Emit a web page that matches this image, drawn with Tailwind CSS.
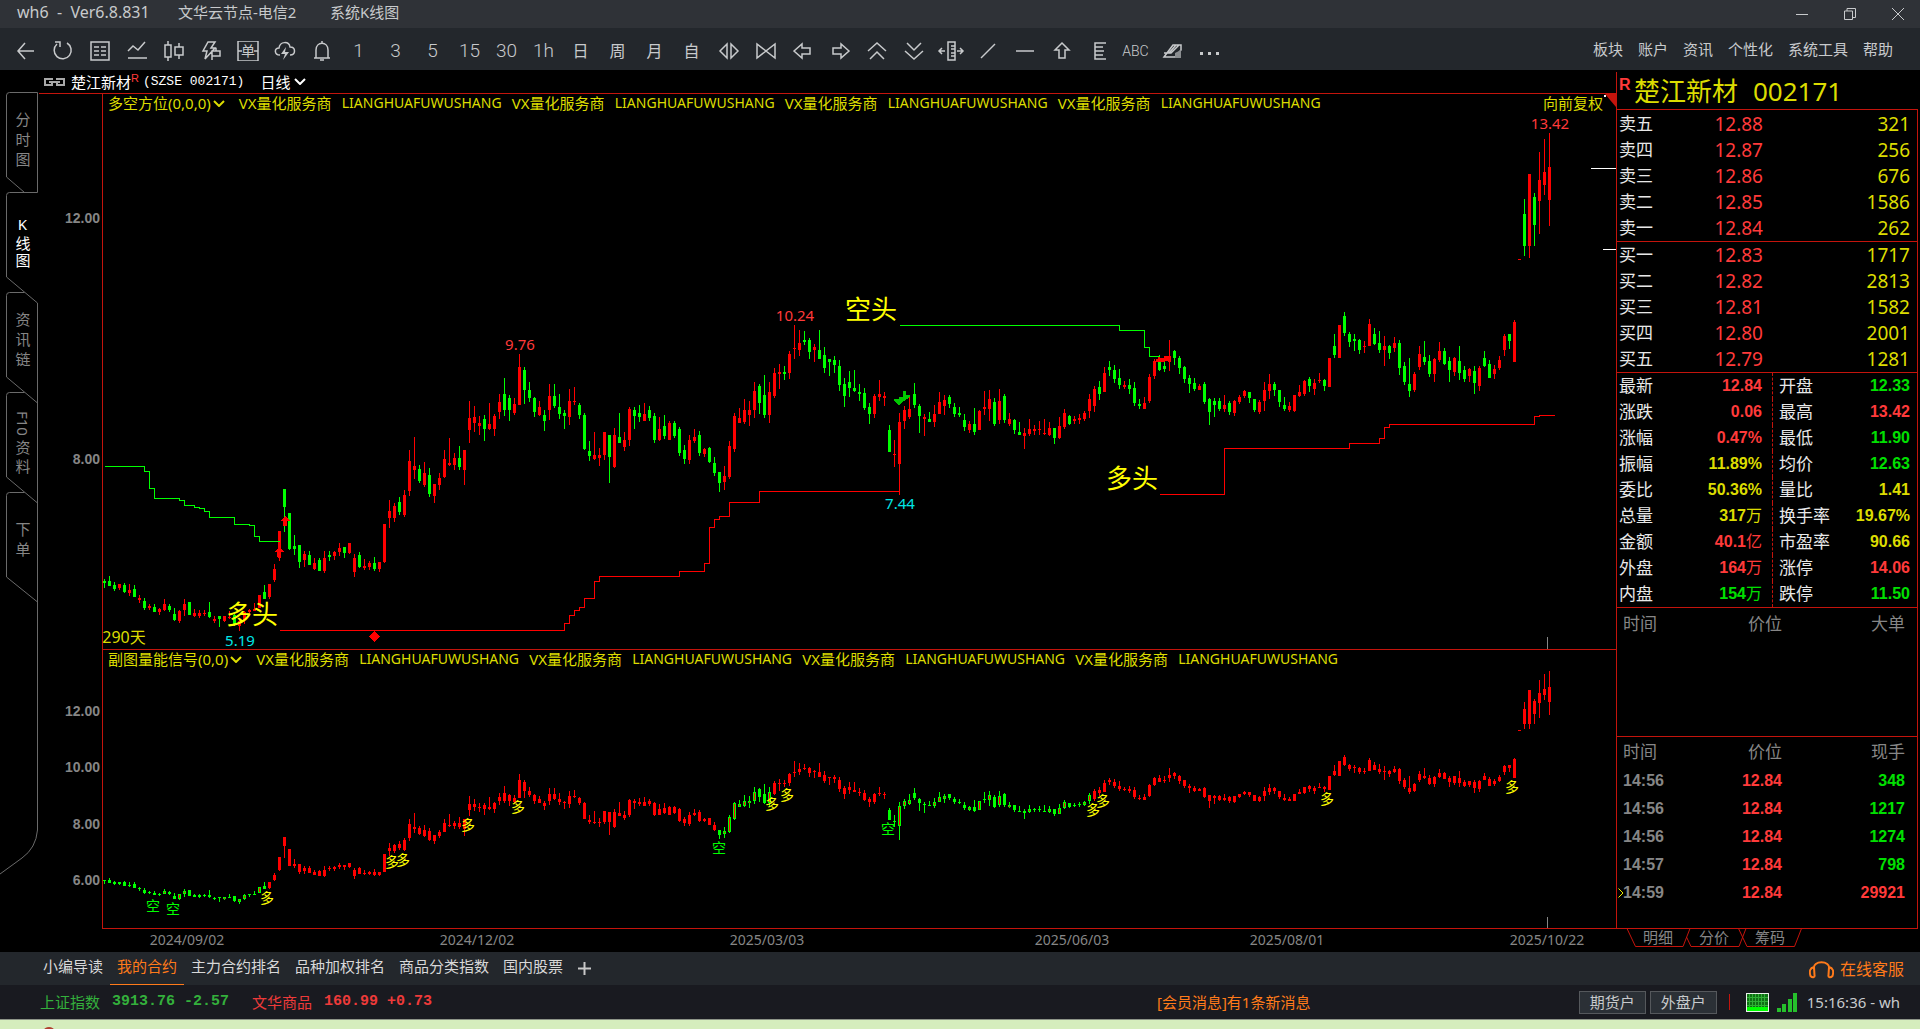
<!DOCTYPE html>
<html lang="zh-CN">
<head>
<meta charset="utf-8">
<title>wh6 - 系统K线图</title>
<script src="https://cdn.jsdelivr.net/npm/@tailwindcss/browser@4"></script>
</head>
<body class="bg-black font-['Noto_Sans','Noto_Sans_CJK_SC',sans-serif] text-[15px] leading-5 text-[#c8cacc]">
<div class="flex min-h-screen flex-col">

<header class="flex h-7 shrink-0 items-center bg-[#2f3237] pl-[17px] pr-4">
  <h1 class="flex items-center pb-1 whitespace-pre"><span class="w-[161px] text-[16px] leading-5">wh6  -  Ver6.8.831</span><span class="w-[152px]">文华云节点-电信2</span><span>系统K线图</span></h1>
  <div class="ml-auto flex gap-9">
    <button aria-label="最小化"><svg class="size-3" viewBox="0 0 12 12" stroke="#c8cacc"><path d="M0 6.5H12"/></svg></button>
    <button aria-label="还原"><svg class="size-3" viewBox="0 0 12 12" fill="none" stroke="#c8cacc"><path d="M.5 3H8.5V11.5H.5ZM3 3V.5H11.5V9.500H8.500"/></svg></button>
    <button aria-label="关闭"><svg class="size-3" viewBox="0 0 12 12" stroke="#c8cacc"><path d="M0 0L12 12M12 0L0 12"/></svg></button>
  </div>
</header>

<nav class="flex h-[42px] shrink-0 items-center bg-[#23272c] pl-[7px] pr-[27px]">
  <div id="tools" class="flex items-center pt-[3px]"></div>
  <div class="ml-auto flex gap-[15px] whitespace-nowrap">
    <a href="#">板块</a><a href="#">账户</a><a href="#">资讯</a><a href="#">个性化</a><a href="#">系统工具</a><a href="#">帮助</a>
  </div>
</nav>

<main class="flex flex-1">
  <aside class="relative w-[39px] shrink-0 text-[#868686]">
    <svg class="absolute inset-0" width="39" height="830" fill="none" stroke="#6a6a6a">
      <path d="M6.500 25.500Q6.500 22.500 9.500 22.500H37.500V122.500H9.500Q6.500 122.500 6.500 125.500V207L37.500 233V760Q36 778 22 788L0 804M6.500 25V107L24.500 122.500M24.500 222.500H9.500Q6.500 222.500 6.500 225.500V307L37.500 333M24.500 322.500H9.500Q6.500 322.500 6.500 325.500V407L37.500 433M24.500 422.500H9.500Q6.500 422.500 6.500 425.500V507L37.500 532"/>
    </svg>
    <nav class="relative flex flex-col items-center pt-[22px] pl-1.5">
      <a href="#" class="flex h-[100px] items-center justify-center [writing-mode:vertical-rl] tracking-[5px]">分时图</a>
      <a href="#" class="flex h-[100px] items-center justify-center text-white [writing-mode:vertical-rl] [text-orientation:upright] tracking-[2px]">K线图</a>
      <a href="#" class="flex h-[100px] items-center justify-center [writing-mode:vertical-rl] tracking-[5px]">资讯链</a>
      <a href="#" class="flex h-[100px] items-center justify-center [writing-mode:vertical-rl]">F10&nbsp;资&nbsp;料</a>
      <a href="#" class="flex h-[100px] items-center justify-center [writing-mode:vertical-rl] tracking-[5px]">下单</a>
    </nav>
  </aside>

  <section class="flex min-w-0 flex-1 flex-col">
    <div class="flex h-[23px] items-center pl-[5px] text-white">
      <svg class="mr-1.5" width="21" height="8" fill="none" stroke="#a8a8a8" stroke-width="2"><path d="M8 2V1H1V7H8V5M13 2V1H20V7H13V5M5 4H16"/></svg>
      <span>楚江新材</span><sup class="-top-1 font-['Liberation_Sans'] text-[11px] text-[#ff3a3a]">R</sup>
      <span class="ml-1 font-['Liberation_Mono',monospace] text-[13px] leading-5">(SZSE 002171)</span>
      <button class="ml-4 flex items-center gap-1">日线<svg width="12" height="7" fill="none" stroke="#fff" stroke-width="2"><path d="M1 1L6 6L11 1"/></svg></button>
    </div>

    <div class="flex h-[556px] border-t border-[#c4140c]">
      <svg id="axis1" class="w-[63px] shrink-0" height="555"></svg>
      <div class="relative min-w-0 flex-1 overflow-hidden border-l border-[#c4140c]">
        <svg id="price" class="block w-full" height="555" shape-rendering="crispEdges"></svg>
        <div class="absolute inset-x-0 top-0 flex pl-[5px] pr-[13px] leading-[18px] whitespace-nowrap text-[#dcdc00]">
          <button class="mr-[14px] flex items-center gap-0.5">多空方位(0,0,0)<svg width="12" height="7" fill="none" stroke="#dcdc00" stroke-width="2"><path d="M1 1L6 6L11 1"/></svg></button>
          <div class="vx flex"></div>
          <button class="ml-auto">向前复权</button>
        </div>
        <svg class="absolute top-0 right-0" width="12" height="13"><path d="M1 0H12V13Z" fill="#c4140c"/><path d="M0 1H2V3H0Z" fill="#fff"/></svg>
      </div>
    </div>

    <div class="flex h-[279px]">
      <svg id="axis2" class="w-[63px] shrink-0" height="279"></svg>
      <div class="relative min-w-0 flex-1 overflow-hidden border-t border-l border-[#c4140c]">
        <svg id="signal" class="block w-full" height="278" shape-rendering="crispEdges"></svg>
        <div class="absolute inset-x-0 top-0 flex pl-[5px] leading-[18px] whitespace-nowrap text-[#dcdc00]">
          <button class="mr-[14px] flex items-center gap-0.5">副图量能信号(0,0)<svg width="12" height="7" fill="none" stroke="#dcdc00" stroke-width="2"><path d="M1 1L6 6L11 1"/></svg></button>
          <div class="vx flex"></div>
        </div>
      </div>
    </div>
    <div class="pl-[63px]"><svg id="dates" class="block w-full border-t border-[#c4140c]" height="24"></svg></div>
  </section>

  <aside class="mt-0.5 w-[304px] shrink-0 pr-0.5">
    <div class="border-r-0 border-l border-[#c4140c]">
      <h2 class="flex h-[37px] items-center text-[26px] leading-8 whitespace-pre text-[#dcdc00]"><span class="mb-3 ml-0.5 w-[15px] font-['Liberation_Sans'] text-[16px] leading-5 font-bold text-[#ff3a3a]">R</span><span class="w-[119px]">楚江新材</span><span>002171</span></h2>
    </div>
    <div class="border-x border-t border-[#c4140c] pt-px"><table id="asks" class="w-full"></table></div>
    <div class="border-x border-t border-[#c4140c]"><table id="bids" class="w-full"></table></div>
    <div class="grid grid-cols-[156px_1fr] border-x border-t border-[#c4140c]">
      <table id="statsL" class="border-r border-dashed border-[#c4140c]"></table>
      <table id="statsR"></table>
    </div>
    <div class="h-[129px] border-x border-t border-[#c4140c]">
      <table class="w-full text-[17px] leading-6 text-[#868686]"><tbody><tr class="h-8"><th class="w-1/3 pl-1.5 text-left font-normal">时间</th><th class="w-1/3 pr-[35px] text-right font-normal">价位</th><th class="w-1/3 pr-3 text-right font-normal">大单</th></tr></tbody></table>
    </div>
    <div class="relative h-[192px] border-x border-t border-[#c4140c]">
      <table id="ticks" class="w-full"></table>
      <svg class="absolute top-[151px] left-px" width="6" height="10" fill="none" stroke="#f0f000"><path d="M.5 .5L5 5L.5 9.500"/></svg>
    </div>
    <div class="relative h-6 text-[15px] leading-5 text-[#868686]">
      <svg class="absolute inset-0" width="302" height="24" fill="none" stroke="#c4140c"><path d="M0 .5H302M11 .5L19.500 18.500H67L74 .5M70.500 9L75 18.500H123L130 .5M122.500 .5L131 18.500H178.500L185.500 .5"/></svg>
      <nav class="relative flex gap-[26px] pl-[27px] leading-[18px]"><a href="#">明细</a><a href="#">分价</a><a href="#">筹码</a></nav>
    </div>
  </aside>
</main>

<nav class="flex h-[33px] shrink-0 items-stretch bg-[#23272c] pl-9 pr-4 leading-7 whitespace-nowrap text-[#d8d8d8]">
  <a href="#" class="px-[7px]">小编导读</a>
  <a href="#" class="border-b border-[#ff7a1a] px-[7px] text-[#ff7a1a]">我的合约</a>
  <a href="#" class="px-[7px]">主力合约排名</a>
  <a href="#" class="px-[7px]">品种加权排名</a>
  <a href="#" class="px-[7px]">商品分类指数</a>
  <a href="#" class="px-[7px]">国内股票</a>
  <button class="ml-2" aria-label="添加"><svg width="13" height="13" stroke="#c8c8c8" stroke-width="2"><path d="M6.500 0V13M0 6.500H13"/></svg></button>
  <a href="#" class="ml-auto flex items-center gap-1.5 text-[16px] text-[#ff7a1a]"><svg width="25" height="20" fill="none" stroke="#ff7a1a" stroke-width="2"><path d="M5 10C3 1 22 1 20 10M5 8C1 9 0 12 1.500 17C4 19.500 6 18 5.500 16ZM20 8C24 9 25 12 23.500 17C21 19.500 19 18 19.500 16Z"/></svg>在线客服</a>
</nav>

<footer class="flex h-[35px] shrink-0 items-center border-b border-[#8d9488] bg-[#191a20] pl-10 pr-5 whitespace-pre">
  <div class="flex w-[1117px] shrink items-center text-[#34b03c]">
    <span class="w-[72px]">上证指数</span><b class="w-[140px] font-['Liberation_Mono',monospace] font-bold">3913.76 -2.57</b>
    <span class="w-[72px] text-[#ee3a3a]">文华商品</span><b class="font-['Liberation_Mono',monospace] font-bold text-[#ee3a3a]">160.99 +0.73</b>
  </div>
  <a href="#" class="text-[#ff7a1a]">[会员消息]有1条新消息</a>
  <div class="ml-auto flex items-center gap-1">
    <button class="h-[23px] border border-[#55585c] bg-[#2b3036] px-2.5 leading-5">期货户</button>
    <button class="h-[23px] border border-[#55585c] bg-[#2b3036] px-2.5 leading-5">外盘户</button>
    <span class="mx-2 h-4 w-px bg-[#c4140c]"></span>
    <svg class="mx-1" width="23" height="19"><rect width="23" height="19" fill="#e8f0e8"/><rect x="1" y="1" width="21" height="13" fill="#0f6f14"/><rect x="1" y="14" width="21" height="4" fill="#0f0"/><path d="M3.500 1V14M6.500 1V14M9.500 1V14M12.500 1V14M15.500 1V14M18.500 1V14M1 4.500H22M1 8.500H22M1 12.500H22" stroke="#2fae35"/></svg>
    <svg width="20" height="19" fill="#26c02c"><path d="M0 15H4V19H0ZM5 11H9V19H5ZM11 6H15V19H11ZM16 0H20V19H16Z"/></svg>
    <time class="ml-1.5">15:16:36 - wh</time>
  </div>
</footer>
<div class="min-h-[9px] flex-1 bg-[#d5edbd] pl-10"><svg class="block" width="18" height="9"><ellipse cx="9" cy="10" rx="5" ry="3" fill="#b04030"/></svg></div>
</div>

<script>
const $ = id => document.getElementById(id);

// ---- toolbar ----
const icon = d => `<svg width="22" height="20" viewBox="0 0 22 20" fill="none" stroke="#c8cacc" stroke-width="1.500">${d}</svg>`;
const p = d => icon(`<path d="${d}"/>`);
const tools = [
  ['返回', p('M19 10H3M10 2L3 10L10 18')],
  ['刷新', p('M3 1H8V6M5 3A8.500 8.500 0 1 0 15 2')],
  ['报价', p('M2 1H20V19H2ZM5 6H10M12 6H17M5 10H10M12 10H17M5 14H10M12 14H17')],
  ['分时', p('M2 10L7 5L12 9L19 1M2 17H21')],
  ['K线', p('M5 0V4M5 16V20M2 4H8V16H2ZM16 2V6M16 14V18M12 6H20V14H12Z')],
  ['闪电下单', p('M8 1H15L11 7H15L5 18L7 10H3ZM12 19V10H20V15H12M16 7V10')],
  ['画线下单', icon('<path d="M1 0H21V20H1ZM1 10H5M17 10H21"/><text x="11" y="15" text-anchor="middle" font-size="14" fill="#c8cacc" stroke="none">单</text>')],
  ['云下单', icon('<path d="M6 14C0 14 0 7 5 7C6 0 15 0 16 6C22 6 22 14 16 14"/><path d="M12 6L7 13H11L9 19L15 11H11Z" fill="#c8cacc" stroke="none"/>')],
  ['预警', p('M3 17H19M5 17V9C5 0 17 0 17 9V17M11 0V2M9 19H13')],
  ['1分钟', '1'], ['3分钟', '3'], ['5分钟', '5'], ['15分钟', '15'], ['30分钟', '30'], ['1小时', '1h'],
  ['日线', '日'], ['周线', '周'], ['月线', '月'], ['自定义', '自'],
  ['放大', p('M9 3V17L2 10ZM13 3V17L20 10Z')],
  ['缩小', p('M2 3V17L11 10ZM20 3V17L11 10Z')],
  ['左移', p('M2 10L10 3V7H18V13H10V17Z')],
  ['右移', p('M20 10L12 3V7H4V13H12V17Z')],
  ['上翻', p('M2 10L11 2L20 10M4 18L11 11L18 18')],
  ['下翻', p('M2 10L11 18L20 10M4 2L11 9L18 2')],
  ['区间', icon('<path d="M8 1H15V19H8ZM11 5H15M11 8H15M11 12H15M11 15H15"/><path d="M-1 10H5M2 7L-1 10L2 13M17 10H23M20 7L23 10L20 13"/>').replace('<svg ', '<svg overflow="visible" ')],
  ['斜线', p('M4 17L18 3')],
  ['横线', p('M2 10H20')],
  ['箭头', p('M11 2L18 9H14V17H8V9H4Z')],
  ['刻度', p('M18 2H7V18H18M7 6H15M7 10H16M7 14H15')],
  ['文字', 'ABC'],
  ['橡皮', icon('<path d="M2 16L11 4H19V9L13 16ZM2 12H9L17 4M7 12L14 4"/><path d="M13 12L19 9V17H13Z" fill="#8a8d90" stroke="none"/>')],
  ['更多', icon('<path fill="#c8cacc" stroke="none" d="M1 11H4V14H1ZM9 11H12V14H9ZM17 11H20V14H17Z"/>')],
];
$('tools').innerHTML = tools.map(([name, body]) => {
  const cls = body === 'ABC' ? "flex w-[37px] justify-center font-['Roboto'] text-[14px] leading-5 font-light"
    : /^\d/.test(body) ? "flex w-[37px] justify-center font-['Roboto'] text-[19px] leading-5 font-light"
    : "flex w-[37px] justify-center text-[16px] leading-5";
  return `<button class="${cls}" aria-label="${name}">${body}</button>`;
}).join('');

// ---- indicator captions ----
document.querySelectorAll('.vx').forEach(el => {
  el.innerHTML = '<span class="w-[103px]">VX量化服务商</span><span class="w-[170px] text-[14px] leading-[18px]">LIANGHUAFUWUSHANG</span>'.repeat(4);
});

// ---- candles: direction, high, body top, body bottom, low, in thirds of a pixel below `top` ----
const segments = [
 {top:236, bars:`g747,753,759,773 g738,753,768,768 g756,765,777,783 r762,762,774,780 g759,765,786,789 r762,780,789,797 g765,777,801,801 r795,803,810,819 g804,813,834,840 r822,828,834,840 g822,831,846,846 r834,837,846,855 r807,822,840,843 g822,828,840,846 g834,852,870,873 r840,843,873,879 r807,822,840,858 g816,816,855,855 r837,849,858,861 r840,849,858,864 r840,849,852,858 g816,846,861,864 r858,867,873,879 g858,858,867,891 r858,858,873,876 r843,861,864,868 g852,855,885,888 r870,873,888,903 r843,846,870,881 r837,840,846,858 r819,837,843,843 r795,795,834,834 g765,786,807,807 r762,762,801,807 r702,717,750,756 r603,603,684,693 g477,477,531,606 g549,549,657,660 g615,648,657,675 g645,645,696,714 r663,672,690,711 g663,675,705,705 r684,699,717,720 g684,690,723,723 r663,684,723,729 g663,675,681,693 r663,666,678,690 r639,654,666,678 g651,651,669,684 r639,639,669,672 r672,684,726,741 g666,675,711,714 r687,708,714,720 r693,699,711,720 g681,699,717,723 r696,696,717,726 r582,582,696,699 r510,543,564,594 r519,528,564,576 g501,516,546,555 r480,495,555,561 r360,393,483,498 r321,408,420,447 g405,417,453,459 r396,429,465,471 g414,435,492,501 r462,462,498,519 r429,444,465,480 r360,387,441,444 r324,399,405,408 r369,384,405,420 g348,384,411,420 r360,360,420,465 r213,264,300,339 r228,261,279,306 r258,279,288,315 g255,267,297,333 r219,282,297,300 r252,258,297,318 r192,216,246,267 g144,192,240,258 g195,204,240,273 r204,222,249,255 r72,111,225,225 g111,120,180,222 g156,180,204,216 g201,204,246,261 r213,231,255,258 g240,255,273,303 r162,198,240,270 g162,198,228,234 g192,231,252,267 g240,249,258,297 r177,213,261,285 r171,213,216,225 g219,225,255,267 g249,255,357,360 g333,363,378,393 r306,375,387,390 r354,375,384,408`},
 {top:196, bars:`r426,426,495,510 g435,435,501,579 r414,435,531,534 g369,441,459,459 r426,450,471,483 r351,357,450,468 g351,360,378,417 g345,369,381,396 r339,372,393,393 g348,360,384,393 g369,378,450,459 r381,417,450,453 g375,408,438,447 r393,399,450,450 g393,399,438,444 g411,417,489,498 g465,480,507,522 r435,450,510,522 r417,441,453,459 g423,435,489,498 r474,477,492,501 g471,474,516,519 g501,519,549,558 g546,546,579,606 r528,558,576,600 r453,468,561,567 r369,378,477,486 r354,384,399,399 r327,360,396,402 r333,360,375,408 r276,303,360,384 g282,288,339,372 g255,315,375,384 r276,306,375,399 r234,249,318,324 r222,246,252,297 g228,246,252,270 r183,192,249,267 r105,174,177,207 r120,159,180,198 g123,150,156,165 g144,150,186,207 r162,171,180,216 g120,180,207,207 g171,195,234,249 g207,207,216,258 g198,210,225,249 g210,228,285,303 g264,282,318,351 g243,276,294,321 g240,294,303,306 g282,306,312,333 g294,309,354,360 g339,351,372,402 r312,318,372,384 r270,312,321,333 r306,318,324,348 g405,420,486,486 r450,492,495,530 r369,396,522,615 r348,360,393,417 r321,357,381,387 g279,312,345,354 g342,348,378,429 r372,381,387,438 g366,387,396,396 r345,372,396,411 r306,336,372,372 r315,330,348,375 g315,321,342,354 g339,351,372,381 g351,369,375,381 g372,390,411,423 r393,402,420,429 g354,402,426,435 r360,363,420,420 r303,351,357,375 r300,327,357,393 g324,336,402,408 r297,333,390,402 g312,318,390,399 r369,387,402,408 g387,390,420,432 g396,426,435,435 r414,429,438,477 r387,417,432,438 r405,417,423,435 r393,417,420,435 r387,429,432,435 r396,414,435,438 g414,414,444,462 r381,408,444,447 r357,369,411,417 g375,378,402,405 r378,387,393,402 r372,384,390,402 r363,369,387,393 r312,327,363,384 r288,297,348,366 g273,291,312,330 r231,249,306,306 g213,231,240,258 g225,240,267,279 g237,264,285,297 r273,285,291,297 g267,285,297,312 g276,294,339,348 g327,342,348,357 r321,339,357,357 r252,261,333,339 r207,213,258,267 g195,213,240,243 g200,228,237,246 r150,198,216,243 g180,183,204,225 g198,204,234,252 g228,231,267,279 g255,264,282,309 g264,279,297,303 r282,288,300,300 g276,282,336,342 g324,327,366,405 g324,333,345,381 g324,333,357,363 r315,345,357,366 g333,339,366,375 r330,333,369,378 r315,321,336,342 r300,303,318,324 g306,306,324,339 g327,327,360,366 r330,336,366,372 r276,300,333,363 r252,282,303,327 g276,282,300,318 g300,300,336,351 g321,345,357,363 r336,348,360,366 r315,315,363,366 r285,306,318,321 r270,273,312,318 g261,267,288,306 r267,279,297,315 r249,270,273,279 g267,270,288,303 r204,204,291,291 g132,168,195,204 r105,105,204,204 g66,78,129,138 g126,132,156,171 g132,147,153,183 g147,150,180,192 r153,168,171,188 r87,102,168,168 g114,132,162,165 g123,159,180,189 r138,168,180,228 g165,168,189,207 r141,159,174,186 g150,159,234,255 g216,228,276,285 g204,282,303,321 r246,252,300,306 r168,192,231,240 g153,201,216,225 g195,213,252,261 r204,207,252,276 r156,183,210,216 g174,183,222,225 g201,213,240,276 r201,204,246,258 g168,213,249,270 g228,240,267,276 r234,237,258,276 g228,243,279,312 r228,234,288,303 g183,204,228,231 g210,222,264,264 r225,237,252,267 r198,210,234,240 r132,138,180,198 g132,132,153,177 r90,96,216,216`},
 {top:0, bars:`r495,495,498,498 g315,360,456,486 r240,240,456,492 g297,309,393,456 r174,258,321,420 r135,234,273,303 r117,219,318,396`},
];
const bars = segments.flatMap(s => s.bars.split(' ').map(t => ({
  up: t[0] === 'r', y: t.slice(1).split(',').map(v => s.top + v / 3),
})));
const RED = '#f00', GREEN = '#0f0';
const rect = (x, y, w, h, f) => `<rect x="${x}" y="${Math.round(y)}" width="${w}" height="${Math.max(1, Math.round(y + h) - Math.round(y))}" fill="${f}"/>`;
const text = (x, y, s, fill, size = 15, extra = '') => `<text x="${x}" y="${y}" fill="${fill}" font-size="${size}" text-anchor="middle" ${extra}>${s}</text>`;

let main = '', sub = '';
bars.forEach((b, i) => {
  const x = 5 * i, [h, t, o, l] = b.y, c = b.up ? RED : GREEN;
  main += rect(x + 1, h, 1, l - h, c) + rect(x, t, 3, o - t, c);
  const [H, T, O, L] = b.y.map(v => 61 + (v - 124.5) * 0.4675);
  const weak = i < 33 || (i > 122 && i < 134) || (i > 156 && i < 198);
  const k = weak ? GREEN : RED;
  sub += rect(x + 1, H, 1, L - H, k) + rect(x, T, 3, O - T, k);
  if (weak && b.up && O - T > 2) sub += rect(x + 1, T + 1, 1, O - T - 2, RED);
});

// trend stop lines
const line = (d, c) => `<path transform="translate(-102.500 -93.500)" d="${d}" fill="none" stroke="${c}"/>`;
main += line('M104 466H144V471H149V488H154V498H179V500H184V505H194V507H199V508H204V511H209V517H234V524H249V525H254V536H259V541H279', GREEN)
  + line('M279 630H564V623H569V615H574V610H579V607H584V598H594V581H599V576H679V571H704V563H709V527H714V519H719V516H729V502H759V491H899', RED)
  + line('M899 325H1119V330H1144V347H1149V356H1159', GREEN)
  + line('M1159 494H1224V448H1349V443H1379V438H1384V427H1389V424H1534V416H1539V415H1554', RED);
// turn markers
main += `<g transform="translate(-103 -94)"><path fill="#f00" d="M285 516L290 521H287V526H283V521H280ZM279 547L285 552H281V557H277V552H274ZM374 631L380 636L374 642L369 636ZM1156 359H1158V357H1160V358H1164V356H1168V358H1171V361H1165V362H1156Z"/><path fill="#00c800" d="M903 391H906V395H910V397L904 401L899 405L894 401V399H899V397H903Z"/></g>`;
main += text(1447, 35, '13.42', '#ff3a3a') + text(692, 227, '10.24', '#ff3a3a') + text(417, 256, '9.76', '#ff3a3a')
  + text(137, 552, '5.19', '#00e6e6') + text(797, 415, '7.44', '#00e6e6')
  + text(21, 549, '290天', '#dcdc00', 16)
  + text(149, 530, '多头', '#ff0', 26) + text(768, 225, '空头', '#ff0', 26) + text(1029, 394, '多头', '#ff0', 26)
  + rect(1444, 543, 1, 12, '#868686') + '<svg x="100%" overflow="visible"><path d="M-25 74.500H0M-13 155.500H0" stroke="#fff"/></svg>';
$('price').innerHTML = main;

[[50,913,'空'],[70,916,'空'],[164,905,'多'],[289,869,'多'],[300,867,'多'],[365,832,'多'],[415,814,'多'],[616,855,'空'],[669,811,'多'],[684,802,'多'],[785,836,'空'],[990,817,'多'],[1000,808,'多'],[1224,806,'多'],[1409,794,'多']]
  .forEach(([x, y, s]) => { sub += text(x, y - 652, s, s === '多' ? '#ff0' : GREEN, 14); });
$('signal').innerHTML = sub + rect(1444, 267, 1, 11, '#868686');

const axis = (id, rows) => { $(id).innerHTML = rows.map(([y, s]) => `<text x="61" y="${y}" text-anchor="end" font-family="Liberation Sans" font-size="14" font-weight="bold" fill="#868686">${s}</text>`).join(''); };
axis('axis1', [[129, '12.00'], [370, '8.00']]);
axis('axis2', [[67, '12.00'], [123, '10.00'], [180, '8.00'], [236, '6.00']]);
$('dates').innerHTML = [[85, '2024/09/02'], [375, '2024/12/02'], [665, '2025/03/03'], [970, '2025/06/03'], [1185, '2025/08/01'], [1445, '2025/10/22']].map(([x, s]) => text(x, 16, s, '#868686', 14)).join('');

// ---- quote panel ----
const book = rows => '<tbody>' + rows.map(([n, a, v]) => `<tr class="h-[26px]"><th class="w-[50px] pl-0.5 text-left text-[17px] leading-5 font-normal text-[#e8e8e8]">${n}</th><td class="w-[96px] text-right text-[19px] leading-5 text-[#ff3a3a]">${a}</td><td class="pr-[7px] text-right text-[19px] leading-5 text-[#dcdc00]">${v}</td></tr>`).join('') + '</tbody>';
$('asks').innerHTML = book([['卖五','12.88',321],['卖四','12.87',256],['卖三','12.86',676],['卖二','12.85',1586],['卖一','12.84',262]]);
$('bids').innerHTML = book([['买一','12.83',1717],['买二','12.82',2813],['买三','12.81',1582],['买四','12.80',2001],['买五','12.79',1281]]);

const tone = { r: 'text-[#ff3a3a]', g: 'text-[#00e000]', y: 'text-[#dcdc00]' };
const stats = (rows, pad) => '<tbody>' + rows.map(([n, v, c]) => `<tr class="h-[26px]"><th class="${pad[0]} text-left text-[17px] leading-5 font-normal whitespace-nowrap text-[#e8e8e8]">${n}</th><td class="${pad[1]} text-right font-['Liberation_Sans','Noto_Sans_CJK_SC'] text-[16px] leading-5 font-bold ${tone[c]}">${v.replace(/[万亿]/, '<span class="font-normal">$&</span>')}</td></tr>`).join('') + '</tbody>';
$('statsL').innerHTML = stats([['最新','12.84','r'],['涨跌','0.06','r'],['涨幅','0.47%','r'],['振幅','11.89%','y'],['委比','50.36%','y'],['总量','317万','y'],['金额','40.1亿','r'],['外盘','164万','r'],['内盘','154万','g']], ['pl-0.5', 'pr-2.5']);
$('statsR').innerHTML = stats([['开盘','12.33','g'],['最高','13.42','r'],['最低','11.90','g'],['均价','12.63','g'],['量比','1.41','y'],['换手率','19.67%','y'],['市盈率','90.66','y'],['涨停','14.06','r'],['跌停','11.50','g']], ['pl-1.5', 'pr-[7px]']);

$('ticks').innerHTML = '<tbody><tr class="h-[30px] text-[17px] leading-6 text-[#868686]"><th class="w-1/3 pl-1.5 text-left font-normal">时间</th><th class="w-1/3 pr-[35px] text-right font-normal">价位</th><th class="w-1/3 pr-3 text-right font-normal">现手</th></tr>'
  + [['14:56',348,'g'],['14:56',1217,'g'],['14:56',1274,'g'],['14:57',798,'g'],['14:59',29921,'r']].map(([t, v, c]) => `<tr class="h-7 font-['Liberation_Sans'] text-[16px] leading-5 font-bold"><td class="pl-1.5 text-[#868686]">${t}</td><td class="pr-[35px] text-right text-[#ff3a3a]">12.84</td><td class="pr-3 text-right ${tone[c]}">${v}</td></tr>`).join('') + '</tbody>';
</script>
</body>
</html>
